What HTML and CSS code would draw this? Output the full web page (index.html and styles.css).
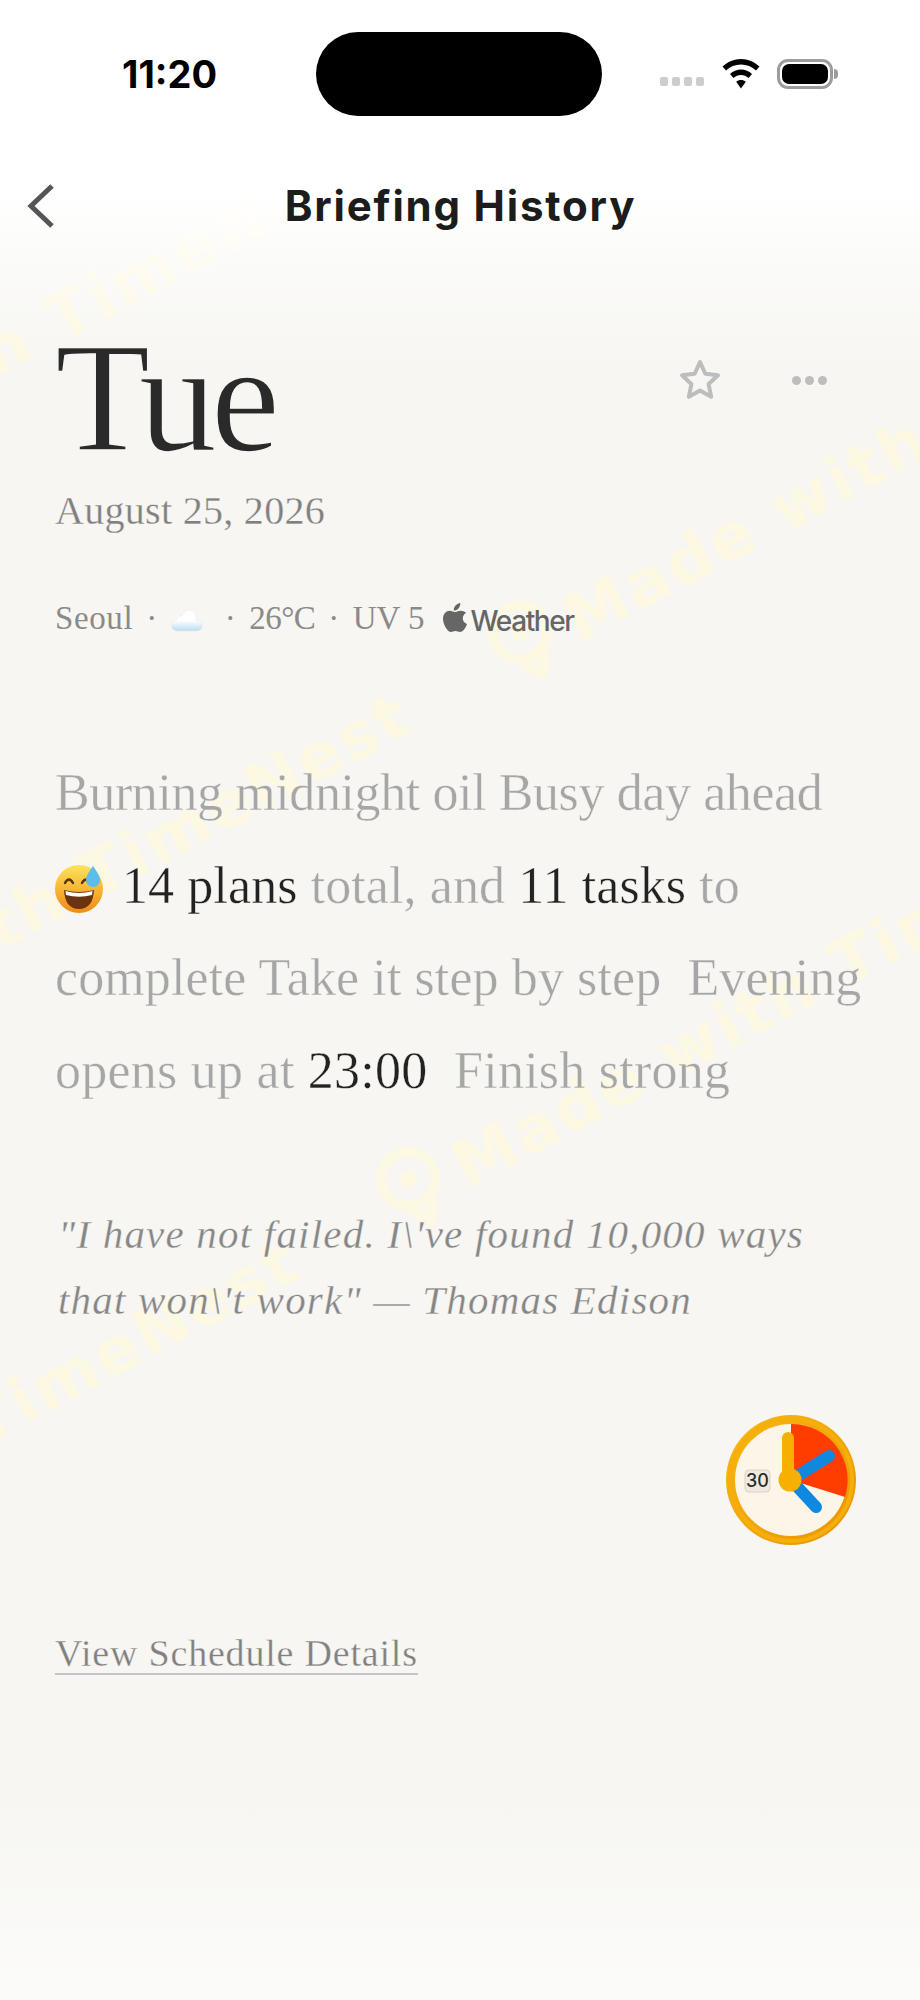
FILE: index.html
```html
<!DOCTYPE html>
<html lang="en">
<head>
<meta charset="utf-8">
<title>Briefing History</title>
<link rel="stylesheet" href="styles.css">
</head>
<body>
<div class="page">
  <div class="watermarks" aria-hidden="true">
    <div class="wm wm-a">n TimeNest</div>
    <div class="wm wm-b">with TimeNest<svg class="wm-icon" viewBox="0 0 60 70"><circle cx="30" cy="27" r="22"/><path d="M20 50l10 16 10-16"/><circle class="wm-core" cx="30" cy="27" r="7"/></svg>Made with TimeNest</div>
    <div class="wm wm-c">TimeNest<svg class="wm-icon" viewBox="0 0 60 70"><circle cx="30" cy="27" r="22"/><path d="M20 50l10 16 10-16"/><circle class="wm-core" cx="30" cy="27" r="7"/></svg>Made with TimeNest</div>
  </div>
  <div class="fade"></div>
  <div class="content">
    <header class="status">
      <div class="time">11:20</div>
      <div class="island"></div>
      <div class="indicators">
        <div class="signal"><i></i><i></i><i></i><i></i></div>
        <svg class="wifi" viewBox="0 0 38 30"><path d="M19 0C12 0 5.500 2.800 0.500 7.600L4 11.500C8 7.700 13.300 5.500 19 5.500S30 7.700 34 11.500L37.500 7.600C32.500 2.800 26 0 19 0Z"/><path d="M19 10.500C15 10.500 11 12 8 15L11.500 18.900C13.600 17 16.200 16 19 16S24.400 17 26.500 18.900L30 15C27 12 23 10.500 19 10.500Z"/><path d="M19 21C17.200 21 15.500 21.600 14.200 22.800L19 29.500L23.800 22.800C22.500 21.600 20.800 21 19 21Z"/></svg>
        <div class="battery"><div class="battery-fill"></div></div>
      </div>
    </header>

    <nav class="nav">
      <svg class="back" viewBox="0 0 27 44"><path d="M25 2L4 22L25 42"/></svg>
      <h1 class="nav-title">Briefing History</h1>
      <span></span>
    </nav>

    <main class="main">
      <section class="hero">
        <div>
          <h2 class="day">Tue</h2>
          <p class="date">August 25, 2026</p>
        </div>
        <div class="actions">
          <svg class="star" viewBox="0 0 44 44"><path d="M22 4L27.300 15.800L40 17.300L30.600 26L33.200 38.800L22 32.400L10.800 38.800L13.400 26L4 17.300L16.700 15.800Z"/></svg>
          <div class="more"><i></i><i></i><i></i></div>
        </div>
      </section>

      <section class="meta">
        <span>Seoul</span><span class="sep">·</span>
        <svg class="cloud" viewBox="0 0 32 24"><defs><linearGradient id="cl" x1="0" y1="0" x2="0" y2="1"><stop offset="0.500" stop-color="#ffffff"/><stop offset="1" stop-color="#bcdcf2"/></linearGradient></defs><path fill="url(#cl)" stroke="#e3e8ec" stroke-width="0.500" d="M7 23C3 23 0.500 20.500 0.500 17.500C0.500 14.500 2.800 12.300 5.600 12C6.200 8.800 8.800 7.400 11 8C12.200 3.800 15.800 1.500 19 2C22.500 2.500 24.800 5.300 25 9C25 10 25 11 24.800 12C28.500 12 31.500 14.300 31.500 17.500C31.500 20.800 29 23 25 23Z"/></svg>
        <span class="sep sep-b">·</span><span class="num">26°C</span><span class="sep">·</span><span class="uv">UV 5</span>
        <span class="brand">
          <svg class="apple" viewBox="0 0 24 29"><path d="M17.300 0C17.500 2 16.700 3.900 15.600 5.300C14.400 6.700 12.600 7.800 10.800 7.600C10.500 5.800 11.500 3.800 12.500 2.600C13.700 1.200 15.700 0.200 17.300 0ZM23.200 9.800C21.100 11.100 19.800 13 19.800 15.300C19.800 18 21.400 20 24 21C23.300 23.100 22.400 24.900 21.100 26.600C19.900 28.100 18.700 29 17.100 29C15.400 29 14.700 28 12.500 28C10.300 28 9.500 29 8 29C6.300 29 5 27.900 3.700 26.100C1.500 23 0 19.300 0 15.800C0 10.900 3.100 7.800 6.900 7.800C8.900 7.800 10.600 9.100 11.900 9.100C13.100 9.100 15.100 7.700 17.300 7.700C19.700 7.700 21.800 8.500 23.200 9.800Z"/></svg>
          <span class="brand-name">Weather</span>
        </span>
      </section>

      <p class="summary"><span class="tight">Burning midnight oil Busy day ahead</span><br>
        <svg class="emoji" viewBox="0 0 48 48"><defs><linearGradient id="em" x1="0" y1="0" x2="0" y2="1"><stop offset="0" stop-color="#fde35a"/><stop offset="1" stop-color="#f08a12"/></linearGradient></defs><circle cx="24" cy="24" r="24" fill="url(#em)"/><path d="M9 25Q24 29 39 25Q38 44 24 44Q10 44 9 25Z" fill="#6b3410"/><path d="M10.500 26Q24 30 37.500 26L37 30Q24 33.500 11 30Z" fill="#fff"/><path d="M10 18Q14 11 18 18M27 18Q31 11 35 18" fill="none" stroke="#5c3209" stroke-width="2.400" stroke-linecap="round"/><path d="M38 1C41 6 45 10 45 15A7 7 0 0 1 31 15C31 10 35 6 38 1Z" fill="#5cbcec"/></svg>
        <span class="wide"><b>14 plans</b> total, and <b>11 tasks</b> to</span><br>
        <span class="wide">complete Take it step by step&nbsp; Evening</span><br>
        <span class="loose">opens up at <b>23:00</b>&nbsp; Finish strong</span></p>

      <blockquote class="quote">"I have not failed. I\'ve found 10,000 ways<br>that won\'t work" — Thomas Edison</blockquote>

      <div class="clock-row">
        <svg class="clock" viewBox="0 0 130 130">
          <defs><linearGradient id="rim" x1="0" y1="0" x2="1" y2="1"><stop offset="0" stop-color="#f9b916"/><stop offset="1" stop-color="#ea9200"/></linearGradient></defs>
          <circle cx="65" cy="65" r="65" fill="url(#rim)"/>
          <circle cx="65" cy="65" r="61" fill="none" stroke="#f6ae08" stroke-width="4"/>
          <circle cx="65" cy="65" r="56" fill="#fdf6e8"/>
          <path d="M65 65V9A56 56 0 0 1 119 82Z" fill="#ff3d00"/>
          <path d="M65 65L103 41" stroke="#0f88e0" stroke-width="12" stroke-linecap="round"/>
          <path d="M65 65L90 92" stroke="#0f88e0" stroke-width="12" stroke-linecap="round"/>
          <path d="M62 65V23" stroke="#f5b000" stroke-width="12" stroke-linecap="round"/>
          <circle cx="64" cy="65" r="11.500" fill="#f5b000"/>
          <rect x="19" y="55" width="25" height="22" rx="4" fill="#efeae0" stroke="#d8d2c6"/>
          <text x="31.500" y="72" class="clock-num" text-anchor="middle">30</text>
        </svg>
      </div>

      <a class="link">View Schedule Details</a>
    </main>
  </div>
</div>
</body>
</html>
```

FILE: styles.css
```css
* { box-sizing: border-box; }
html, body { margin: 0; padding: 0; }
body { width: 920px; height: 2000px; overflow: hidden; }

.page {
  position: relative;
  width: 920px;
  height: 2000px;
  overflow: hidden;
  background: #f7f6f2;
  font-family: "Liberation Serif", serif;
}

/* watermark strips */
.watermarks { position: absolute; inset: 0; overflow: hidden; }
.wm {
  position: absolute;
  white-space: pre;
  font: 700 64px/80px "DejaVu Sans", sans-serif;
  letter-spacing: 3px;
  color: #fdf8e1;
  transform: rotate(-28deg);
  transform-origin: 0 50%;
}
.wm-a { left: -15px; top: 318px; }
.wm-b { left: -90px; top: 925px; }
.wm-c { left: -30px; top: 1380px; }
.wm-icon {
  width: 74px;
  height: 86px;
  margin: 0 10px 0 100px;
  vertical-align: -16px;
  fill: none;
  stroke: #fdf8e1;
  stroke-width: 8;
}
.wm-core { fill: #fdf8e1; stroke: none; }

.fade {
  position: absolute;
  inset: 0;
  background: linear-gradient(#fff 0, #fff 190px, rgba(255,255,255,.5) 270px, rgba(255,255,255,0) 370px, rgba(255,255,255,0) 1790px, rgba(255,255,255,.6) 2000px);
}

.content { position: relative; }

/* status bar */
.status {
  display: grid;
  grid-template-columns: 316px 286px 1fr;
  align-items: center;
  padding-top: 32px;
}
.time {
  padding-left: 122px;
  font: 700 38px/44px Inter, sans-serif;
  color: #000;
}
.island { height: 84px; border-radius: 42px; background: #000; }
.indicators { display: flex; align-items: center; padding-left: 58px; height: 30px; }
.signal { display: flex; gap: 4px; margin-top: 15px; margin-right: 18px; }
.signal i { width: 8px; height: 9px; border-radius: 2px; background: #cdcdcd; }
.wifi { width: 38px; height: 30px; fill: #000; margin-right: 17px; }
.battery {
  position: relative;
  width: 56px;
  height: 30px;
  border: 3px solid #9c9c9c;
  border-radius: 11px;
  padding: 2px;
  background: #fff;
}
.battery::after {
  content: "";
  position: absolute;
  right: -8px;
  top: 7px;
  width: 4px;
  height: 10px;
  border-radius: 0 5px 5px 0;
  background: #9c9c9c;
}
.battery-fill { height: 100%; border-radius: 7px; background: #000; }

/* nav */
.nav {
  display: grid;
  grid-template-columns: 1fr auto 1fr;
  align-items: center;
  height: 100px;
  margin-top: 40px;
  padding-left: 27px;
}
.back { width: 27px; height: 44px; fill: none; stroke: #555; stroke-width: 5; }
.nav-title {
  margin: 0;
  font: 700 42px/50px Inter, sans-serif;
  letter-spacing: 1.800px;
  color: #1c1c1c;
  transform: translateX(-13px);
}

/* main column */
.main { padding: 64px 46px 0 55px; }
.hero { display: flex; justify-content: space-between; align-items: flex-start; }
.day {
  margin: 0;
  font: 400 156px/156px "Liberation Serif", serif;
  letter-spacing: -6px;
  color: #2a2a2a;
  -webkit-text-stroke: 1.500px #f7f6f2;
}
.date {
  margin: 10px 0 0;
  font-size: 40px;
  line-height: 50px;
  letter-spacing: 0.300px;
  color: #808080;
  -webkit-text-stroke: 0.300px #f7f6f2;
}
.actions { display: flex; align-items: center; gap: 70px; margin-top: 38px; margin-right: 47px; }
.star { width: 44px; height: 44px; fill: none; stroke: #bdbdbd; stroke-width: 4; stroke-linejoin: round; }
.more { display: flex; gap: 4px; }
.more i { width: 9px; height: 9px; border-radius: 50%; background: #bdbdbd; }

.meta {
  display: flex;
  align-items: baseline;
  margin-top: 60px;
  font-size: 33px;
  line-height: 44px;
  letter-spacing: 0.600px;
  color: #8a8a8a;
}
.sep { margin: 0 13px; }
.sep-b { margin-left: 22px; }
.num { letter-spacing: -0.600px; }
.uv { letter-spacing: 0; }
.cloud { width: 32px; height: 24px; align-self: center; margin: 4px 0 0 0; }
.brand { display: flex; align-items: baseline; margin-left: 18px; }
.apple { width: 24px; height: 29px; fill: #666; margin-right: 4px; transform: translateY(3px); }
.brand-name {
  font: 500 28px/34px Inter, sans-serif;
  letter-spacing: -1.400px;
  color: #666;
  transform: translateY(2px);
}

.summary {
  margin: 107px 0 0;
  font-size: 52px;
  line-height: 92.500px;
  white-space: nowrap;
  color: #a6a6a6;
  -webkit-text-stroke: 0.400px #f7f6f2;
}
.summary b { font-weight: 400; color: #222; }
.tight { letter-spacing: -0.400px; }
.wide { letter-spacing: 0.100px; }
.loose { letter-spacing: 0.250px; }
.emoji { width: 48px; height: 48px; vertical-align: -10px; margin-right: 6px; }

.quote {
  margin: 84px 0 0 3px;
  font-size: 41px;
  line-height: 66px;
  font-style: italic;
  letter-spacing: 1.200px;
  white-space: nowrap;
  color: #868686;
  -webkit-text-stroke: 0.300px #f7f6f2;
}

.clock-row { display: flex; justify-content: flex-end; margin-top: 82px; padding-right: 18px; }
.clock { width: 130px; height: 130px; }
.clock-num { font: 500 18px Inter, sans-serif; fill: #2c2c2c; }

.link {
  display: inline-block;
  margin-top: 88px;
  font-size: 38px;
  line-height: 40px;
  letter-spacing: 0.800px;
  color: #808080;
  border-bottom: 2px solid #c4c4c4;
  -webkit-text-stroke: 0.300px #f7f6f2;
}
```
